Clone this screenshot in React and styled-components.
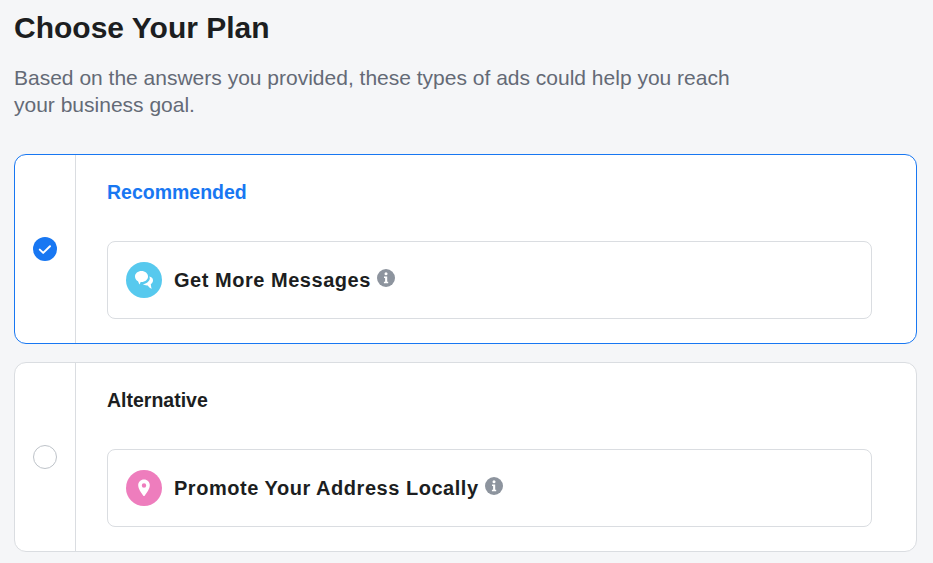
import styled, { createGlobalStyle } from "styled-components";

const GlobalStyle = createGlobalStyle`
  html, body {
    margin: 0;
    height: 100%;
    overflow: hidden;
    background: #f5f6f8;
    font-family: "Liberation Sans", Arial, sans-serif;
  }
`;

const Page = styled.div`
  padding: 9px 16px 0 14px;
`;
const Title = styled.h1`
  margin: 0;
  font-size: 30px;
  line-height: 38px;
  font-weight: 700;
  color: #1c1e21;
`;
const Subtitle = styled.p`
  margin: 17px 0 36px;
  width: 740px;
  font-size: 21px;
  line-height: 27px;
  color: #646a76;
`;
const Plans = styled.div`
  display: flex;
  flex-direction: column;
  gap: 18px;
`;
const Card = styled.div`
  display: flex;
  height: 190px;
  box-sizing: border-box;
  background: #fff;
  border: 1px solid ${(p) => (p.$selected ? "#1877f2" : "#dadde1")};
  border-radius: 12px;
`;
const RadioCol = styled.div`
  width: 61px;
  flex: none;
  display: flex;
  align-items: center;
  justify-content: center;
  box-sizing: border-box;
  border-right: 1px solid #dadde1;
`;
const Radio = styled.div`
  width: 24px;
  height: 24px;
  box-sizing: border-box;
  border-radius: 50%;
  display: flex;
  align-items: center;
  justify-content: center;
  background: ${(p) => (p.$selected ? "#1877f2" : "#fff")};
  border: ${(p) => (p.$selected ? "none" : "1.5px solid #bec3c9")};
`;
const Body = styled.div`
  flex: 1;
  padding: 24px 44px 24px 31px;
`;
const Label = styled.div`
  font-size: 19.5px;
  line-height: 27px;
  font-weight: 700;
  margin-bottom: 35px;
  color: ${(p) => (p.$selected ? "#1877f2" : "#1c1e21")};
`;
const Option = styled.div`
  height: 78px;
  box-sizing: border-box;
  display: flex;
  align-items: center;
  gap: 12px;
  padding: 0 18px;
  border: 1px solid #dadde1;
  border-radius: 8px;
`;
const IconCircle = styled.div`
  width: 36px;
  height: 36px;
  flex: none;
  border-radius: 50%;
  display: flex;
  align-items: center;
  justify-content: center;
  background: ${(p) => p.$color};
`;
const OptionName = styled.span`
  font-size: 20px;
  font-weight: 700;
  letter-spacing: 0.53px;
  color: #1c1e21;
`;
const InfoIcon = styled.svg`
  width: 18px;
  height: 18px;
  margin: -5px 0 0 -6px;
  flex: none;
`;

const Check = () => (
  <svg width="14" height="14" viewBox="0 0 14 14" fill="none">
    <path d="M1.8 7.600L5.200 10.900L12 4.200" stroke="#fff" strokeWidth="2" strokeLinecap="round" strokeLinejoin="round" />
  </svg>
);

const Chat = () => (
  <svg width="22" height="22" viewBox="0 0 22 22" fill="#fff">
    <path d="M8.500 2C12.100 2 15 4.400 15 7.500C15 10.600 12.100 13 8.500 13C8.200 13 7.900 13 7.600 12.900C7.500 13.800 7.100 14.700 6.300 15.400C5.900 14.400 5.500 13.400 5 12.300C3.200 11.300 2 9.500 2 7.500C2 4.400 4.900 2 8.500 2Z" />
    <path d="M16.300 7.500C18.500 7.800 20 9.200 20 11.200C20 13 19.200 14.300 17.800 15C17.900 16.800 18.200 18.600 18.800 19.800C17 19 15.600 17.800 14.800 16.400C12.800 16.600 11 16 9.800 15C13.600 14.800 16.600 12 16.800 9.400C16.800 8.800 16.600 8.100 16.300 7.500Z" />
  </svg>
);

const Pin = () => (
  <svg width="20" height="20" viewBox="0 0 20 20">
    <path
      fill="#fff"
      fillRule="evenodd"
      d="M10 1.600c3.400 0 5.800 2.500 5.800 5.700 0 3.400-3 7.600-5.100 10.400-.4.500-1 .5-1.400 0C7.200 14.900 4.200 10.700 4.200 7.300c0-3.200 2.400-5.700 5.800-5.700zm0 3.700a2.200 2.200 0 100 4.400 2.200 2.200 0 000-4.400z"
    />
  </svg>
);

const Info = () => (
  <InfoIcon viewBox="0 0 18 18">
    <circle cx="9" cy="9" r="9" fill="#8d949e" />
    <circle cx="9" cy="4.800" r="1.500" fill="#fff" />
    <path d="M7 7.500h3.200v5.300h1v1.500H6.900v-1.500h1.200V9H7z" fill="#fff" />
  </InfoIcon>
);

const plans = [
  { label: "Recommended", name: "Get More Messages", color: "#57c9ee", icon: <Chat />, selected: true },
  { label: "Alternative", name: "Promote Your Address Locally", color: "#ee7dbd", icon: <Pin />, selected: false },
];

export default function App() {
  return (
    <Page>
      <GlobalStyle />
      <Title>Choose Your Plan</Title>
      <Subtitle>
        Based on the answers you provided, these types of ads could help you reach your business goal.
      </Subtitle>
      <Plans>
        {plans.map((plan) => (
          <Card key={plan.label} $selected={plan.selected}>
            <RadioCol>
              <Radio $selected={plan.selected}>{plan.selected && <Check />}</Radio>
            </RadioCol>
            <Body>
              <Label $selected={plan.selected}>{plan.label}</Label>
              <Option>
                <IconCircle $color={plan.color}>{plan.icon}</IconCircle>
                <OptionName>{plan.name}</OptionName>
                <Info />
              </Option>
            </Body>
          </Card>
        ))}
      </Plans>
    </Page>
  );
}
